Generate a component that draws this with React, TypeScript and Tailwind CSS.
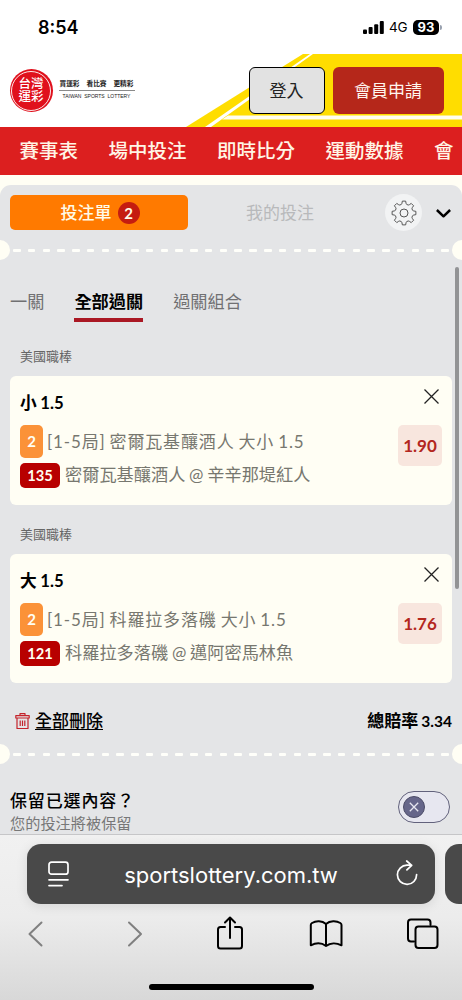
import { clsx } from 'clsx';

type BetType = {
  league: string;
  pick: string;
  market: string;
  code: string;
  match: string;
  odds: string;
};

const navItems = ['賽事表', '場中投注', '即時比分', '運動數據', '會'];

const bets: BetType[] = [
  {
    league: '美國職棒',
    pick: '小 1.5',
    market: '[1-5局] 密爾瓦基釀酒人 大小 1.5',
    code: '135',
    match: '密爾瓦基釀酒人 @ 辛辛那堤紅人',
    odds: '1.90',
  },
  {
    league: '美國職棒',
    pick: '大 1.5',
    market: '[1-5局] 科羅拉多落磯 大小 1.5',
    code: '121',
    match: '科羅拉多落磯 @ 邁阿密馬林魚',
    odds: '1.76',
  },
];

function StatusBar() {
  return (
    <div className="h-[54px] flex items-center justify-between pl-[38px] pr-[20px] font-['Inter','Liberation_Sans',sans-serif] text-black">
      <span className="text-[18px] font-semibold leading-none mt-[2px]">
        8:54
      </span>
      <div className="flex items-center mt-[1px]">
        <svg width="21" height="13" viewBox="0 0 21 13" aria-hidden="true">
          <rect x="0" y="8.5" width="4" height="4.5" rx="1" />
          <rect x="5.6" y="6" width="4" height="7" rx="1" />
          <rect x="11.2" y="3.3" width="4" height="9.7" rx="1" />
          <rect x="16.8" y="0" width="4" height="13" rx="1" />
        </svg>
        <span className="ml-[5px] w-[18px] text-[13.5px] font-normal leading-none tracking-[-0.3px] pt-[1px]">
          4G
        </span>
        <span className="ml-[6px] w-[26px] h-[15px] rounded-[5px] bg-black text-white text-[13px] font-bold leading-[15px] text-center">
          93
        </span>
        <span className="ml-[1px] w-[2px] h-[5px] rounded-r bg-gray-400" />
      </div>
    </div>
  );
}

function Logo() {
  return (
    <div className="flex items-center">
      <div className="size-[43px] rounded-full bg-[#e0101c] p-[1.5px]">
        <div className="size-full rounded-full border border-white/90 flex items-center justify-center">
          <span className="w-[26px] text-white text-[12.5px] leading-[12.5px] font-medium text-center break-all">
            台灣運彩
          </span>
        </div>
      </div>
      <div className="ml-[6px] mb-[3px] w-[76px] flex flex-col text-[#222]">
        <div className="flex justify-between px-px text-[6.7px] leading-[9px] font-bold">
          <span>買運彩</span>
          <span>看比賽</span>
          <span>更精彩</span>
        </div>
        <span className="mt-[2px] h-px bg-[#8a8a8a]" />
        <span className="mt-[2px] text-[5px] leading-[6px] text-center whitespace-nowrap font-['Liberation_Sans',sans-serif]">
          TAIWAN&nbsp; SPORTS&nbsp; LOTTERY
        </span>
      </div>
    </div>
  );
}

function Header() {
  return (
    <header className="relative h-[73px]">
      <svg
        className="absolute right-0 top-0"
        width="282"
        height="73"
        viewBox="180 54 282 73"
        aria-hidden="true"
      >
        <path d="M303 54H462V127H186Z" fill="#ffdd00" />
        <path d="M310 54H313L211 127H205Z" fill="#fff" />
        <path d="M228 115.5H462V119.5H222Z" fill="#fffef0" />
      </svg>
      <div className="relative h-full flex items-center justify-between pl-[9.5px] pr-[18.5px]">
        <Logo />
        <div className="flex gap-2 text-[17px] leading-none">
          <button className="w-[76px] h-[47px] rounded-[6px] border border-black bg-[#e2e2e2] text-[#222]">
            登入
          </button>
          <button className="w-[111px] h-[47px] rounded-[6px] bg-[#b5271a] text-[#fff5ee]">
            會員申請
          </button>
        </div>
      </div>
    </header>
  );
}

function Perforation() {
  return (
    <div className="flex items-center h-[20px] overflow-hidden">
      <span className="size-[20px] -ml-[10px] shrink-0 rounded-full bg-[#fffef4]" />
      <div className="flex-1 flex justify-between pl-[3px] pr-[3px] pt-[1px]">
        {Array.from({ length: 30 }, (_, i) => (
          <span key={i} className="w-[7.5px] h-[3px] rounded-[1px] bg-[#fffffa]" />
        ))}
      </div>
      <span className="size-[20px] -mr-[10px] shrink-0 rounded-full bg-[#fffef4]" />
    </div>
  );
}

// eight teeth, each one given by [radius, angle] corners
const gearPoints = Array.from({ length: 8 }, (_, i) =>
  [
    [9, -17],
    [9.9, -12],
    [12, -8],
    [12, 8],
    [9.9, 12],
    [9, 17],
  ].map(([r, deg]) => {
    const a = ((i * 45 + deg) * Math.PI) / 180;
    return `${(13 + r * Math.cos(a)).toFixed(2)},${(13 + r * Math.sin(a)).toFixed(2)}`;
  }),
)
  .flat()
  .join(' ');

function GearIcon() {
  return (
    <svg
      width="26"
      height="26"
      viewBox="0 0 26 26"
      fill="none"
      stroke="#555"
      strokeWidth="1"
      strokeLinejoin="round"
      aria-hidden="true"
    >
      <polygon points={gearPoints} />
      <circle cx="13" cy="13" r="4" />
    </svg>
  );
}

function BetCard({ bet }: { bet: BetType }) {
  return (
    <div>
      <div className="h-[18px] pl-[10px] text-[13px] leading-[18px] text-[#666]">
        {bet.league}
      </div>
      <div className="mt-[11px] h-[129px] rounded-[6px] bg-[#fffef4] pl-[10px] pr-[10px] pt-[11px] flex justify-between">
        <div className="flex flex-col whitespace-nowrap">
          <span className="h-[32px] text-[16.7px] leading-[33px] [word-spacing:-0.5px] font-bold text-black">
            {bet.pick}
          </span>
          <div className="mt-[6px] h-[33px] flex items-center">
            <span className="w-[23px] h-[33px] rounded-[5px] bg-[#fb9238] text-[#fffef4] text-[15px] font-bold leading-[33px] text-center">
              2
            </span>
            <span className="ml-[4px] text-[17px] leading-[33px] tracking-[0.85px] [word-spacing:-1.2px] text-[#77776f]">
              {bet.market}
            </span>
          </div>
          <div className="mt-[5px] h-[25px] flex items-center">
            <span className="w-[40px] h-[25px] rounded-[5px] bg-[#b80000] text-[#fffef4] text-[14.7px] font-bold leading-[25px] text-center">
              {bet.code}
            </span>
            <span className="ml-[5px] text-[17.2px] leading-[23px] h-[25px] [word-spacing:-0.6px] text-[#77776f]">
              {bet.match}
            </span>
          </div>
        </div>
        <div className="flex flex-col items-end">
          <svg
            className="mt-[1px] mr-[3px]"
            width="15"
            height="16"
            viewBox="0 0 15 16"
            stroke="#222"
            strokeWidth="1.3"
            aria-hidden="true"
          >
            <path d="M.5 1.5l14 14M14.5 1.5l-14 14" />
          </svg>
          <span className="mt-[21px] w-[44px] h-[41px] rounded-[5px] bg-[#f8e6de] text-[#b3271e] text-[17px] font-bold leading-[41px] text-center">
            {bet.odds}
          </span>
        </div>
      </div>
    </div>
  );
}

function TrashIcon() {
  return (
    <svg
      width="15"
      height="17"
      viewBox="0 0 15 17"
      fill="none"
      stroke="#c4232b"
      strokeWidth="1.2"
      strokeLinejoin="round"
      aria-hidden="true"
    >
      <path d="M.8 2.7h13.4V5H.8zM5 2.7V.7h5v2M2 5v10.500h11V5M5.200 7.500v5.600M7.500 7.500v5.600M9.800 7.500v5.600" />
    </svg>
  );
}

function BetSlip() {
  return (
    <section className="h-[649px] rounded-t-[11px] bg-[#e4e5e7] flex flex-col relative">
      <div className="h-[55px] pt-[10px] pl-[10px] pr-[11px] flex items-start">
        <button className="w-[178px] h-[35px] rounded-[5px] bg-[#ff7a00] flex items-center justify-center gap-[6px] pl-[2px] text-[#fffbe8] text-[17px] leading-none font-medium">
          投注單
          <span className="size-[22px] rounded-full bg-[#c51c10] text-[15px] font-bold leading-[22px]">
            2
          </span>
        </button>
        <span className="ml-[58px] w-[70px] h-[35px] text-[17px] leading-[35px] text-[#b8b9bb] whitespace-nowrap">
          我的投注
        </span>
        <span className="-mt-[1px] ml-auto size-[37px] rounded-full bg-[#f2f3f4] flex items-center justify-center">
          <GearIcon />
        </span>
        <svg
          className="ml-[14px] mt-[14px]"
          width="15"
          height="9"
          viewBox="0 0 15 9"
          fill="none"
          stroke="#000"
          strokeWidth="2.5"
          strokeLinejoin="round"
          aria-hidden="true"
        >
          <path d="M.9 1l6.6 6.3L14.1 1" />
        </svg>
      </div>

      <Perforation />

      <div className="mt-[27px] h-[35px] pl-[10px] flex gap-[30px] text-[17.2px] leading-[29px] text-[#707072]">
        {['一關', '全部過關', '過關組合'].map((tab) => (
          <span
            key={tab}
            className={clsx(
              'h-[35px]',
              tab === '全部過關' &&
                'border-b-4 border-[#aa1824] font-bold text-black',
            )}
          >
            {tab}
          </span>
        ))}
      </div>

      <div className="mt-[25px] pl-[10px] pr-[10px] flex flex-col gap-[20px]">
        {bets.map((bet) => (
          <BetCard key={bet.code} bet={bet} />
        ))}
      </div>

      <div className="mt-[24px] h-[28px] pl-[15px] pr-[10px] flex items-center justify-between text-[17px] leading-[28px] text-black">
        <div className="flex items-center gap-[5px]">
          <TrashIcon />
          <span className="font-medium underline underline-offset-2">
            全部刪除
          </span>
        </div>
        <span className="font-bold">
          總賠率 <span className="text-[15.5px] -ml-px">3.34</span>
        </span>
      </div>

      <div className="mt-[9px]">
        <Perforation />
      </div>

      <div className="mt-[24px] pl-[10px] pr-[12px] flex justify-between">
        <div className="flex flex-col">
          <span className="text-[17px] leading-[26px] tracking-[0.85px] font-medium text-black">
            保留已選內容？
          </span>
          <span className="-mt-px text-[15.2px] leading-[20px] text-[#777]">
            您的投注將被保留
          </span>
        </div>
        <span className="mt-[3px] w-[52px] h-[32px] rounded-full border border-[#62627c] bg-[#e7e7f0] pl-[4px] flex items-center">
          <span className="size-[22px] rounded-full bg-[#66668a] border border-[#4c4c68] flex items-center justify-center">
            <svg width="10" height="10" viewBox="0 0 10 10" stroke="#e7e7f0" strokeWidth="1.3" aria-hidden="true">
              <path d="M.8.8l8.4 8.4M9.2.8L.8 9.2" />
            </svg>
          </span>
        </span>
      </div>

      {/* scroll thumb */}
      <span className="absolute right-[3px] top-[82px] w-[4px] h-[322px] rounded-full bg-[#929395]" />
    </section>
  );
}

function BrowserBar() {
  return (
    <footer className="h-[166px] border-t border-[#c6c6c8] bg-linear-to-b from-[#f1f1f1] via-[#ececec] to-[#d8d8d8] overflow-hidden flex flex-col">
      <div className="mt-[9px] pl-[27px] flex gap-[10px]">
        <div className="w-[408px] h-[60px] shrink-0 rounded-[14px] bg-[#494949] shadow-[0_2px_12px_rgba(0,0,0,0.1)] pl-[21px] pr-[17px] flex items-center justify-between text-white">
          <svg width="21" height="26" viewBox="0 0 21 26" fill="none" stroke="currentColor" strokeWidth="1.7" strokeLinecap="round" aria-hidden="true">
            <rect x="1" y="1.2" width="19" height="12" rx="2.5" />
            <path d="M1 18.8h19M1 24.6h13" />
          </svg>
          <span className="mt-[2px] mr-[3px] text-[22px] leading-none font-['Inter','Liberation_Sans',sans-serif]">
            sportslottery.com.tw
          </span>
          <svg className="mb-[2px]" width="22" height="26" viewBox="0 0 22 26" fill="none" stroke="currentColor" strokeWidth="1.7" strokeLinecap="round" strokeLinejoin="round" aria-hidden="true">
            <path d="M20.6 14.6A9.6 9.6 0 1 1 11 5.2h4.6M10.7 1l5 4.3-4.8 4.5" />
          </svg>
        </div>
        <div className="w-[60px] h-[60px] shrink-0 rounded-[14px] bg-[#494949]" />
      </div>

      <svg
        className="mt-[10px]"
        width="462"
        height="40"
        viewBox="0 914 462 40"
        fill="none"
        stroke="#000"
        strokeWidth="2"
        strokeLinecap="round"
        strokeLinejoin="round"
        aria-hidden="true"
      >
        <path d="M41.5 922.5L29.5 934l12 11.5M129 922.5l12 11.5-12 11.5" stroke="#808080" />
        <path d="M225 927h-4.5a2.5 2.5 0 0 0-2.5 2.5V946a2.5 2.5 0 0 0 2.5 2.5h19a2.5 2.5 0 0 0 2.5-2.5v-16.5a2.5 2.5 0 0 0-2.5-2.5H235M230 938v-20M225 922.5l5-5 5 5" />
        <path d="M326 924c-4-3.5-10-3.5-14-1q-1.2.8-1.2 2v20.3c5-2.5 11-2.5 15.2.7 4.2-3.2 10.5-3.2 15.5-.7V925q0-1.2-1.200-2c-4-2.500-10.300-2.500-14.300 1ZM326 924v22" />
        <rect x="415.5" y="926.5" width="22" height="21.5" rx="3" />
        <path d="M414 941.5h-3a3 3 0 0 1-3-3V922.5a3 3 0 0 1 3-3h16.5a3 3 0 0 1 3 3v2.5" />
      </svg>

      <div className="mx-auto mt-[30px] w-[165px] h-[6px] rounded-full bg-black" />
    </footer>
  );
}

export default function App() {
  return (
    <div className="w-[462px] h-[1000px] overflow-hidden bg-white font-['Lato','Noto_Sans_CJK_TC',sans-serif]">
      <StatusBar />
      <Header />
      <nav className="h-[48px] bg-[#dc1f1f] pl-[19.5px] flex items-center gap-[30.5px] text-[19.5px] leading-none font-medium text-[#fff5e6] whitespace-nowrap overflow-hidden">
        {navItems.map((item) => (
          <span key={item}>{item}</span>
        ))}
      </nav>
      <main className="pt-[10px] bg-[#fffef4]">
        <BetSlip />
      </main>
      <BrowserBar />
    </div>
  );
}
